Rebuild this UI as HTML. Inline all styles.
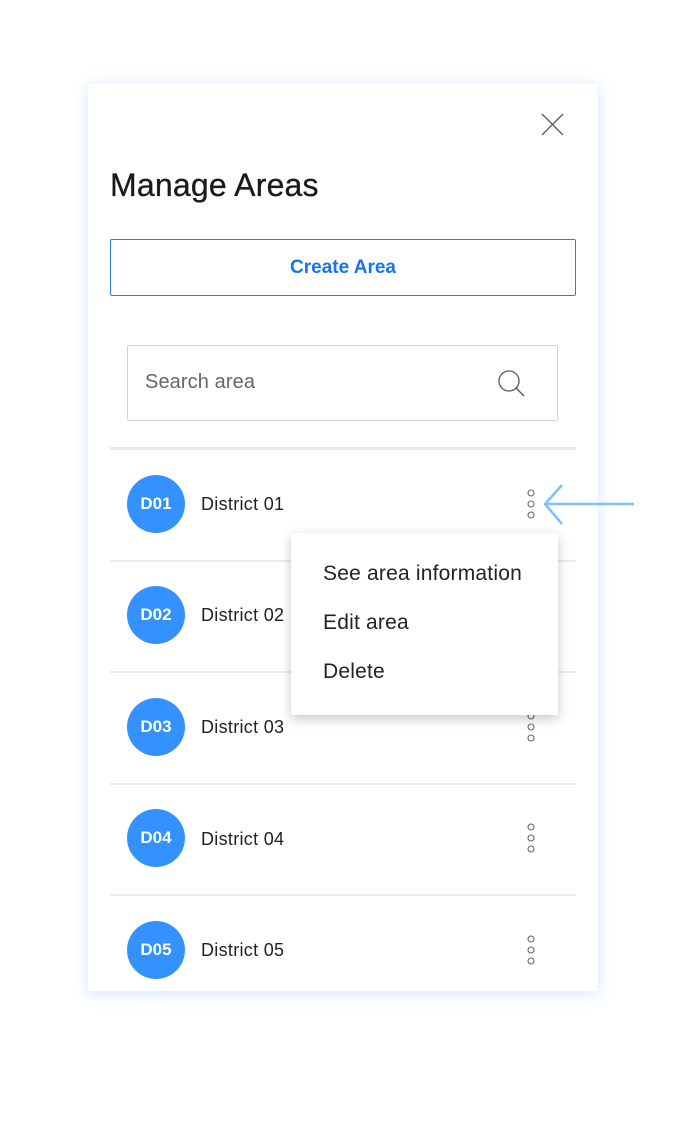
<!DOCTYPE html>
<html><head><style>
body{margin:0;width:686px;height:1126px;background:#fff;font-family:"Liberation Sans",Roboto,sans-serif;position:relative;overflow:hidden}
.card{position:absolute;left:88px;top:84px;width:510px;height:907px;background:#fff;box-shadow:0 2px 14px rgba(120,180,255,0.35)}
.a{position:absolute}
.title{left:110px;top:167px;font-size:32px;color:#1a1a1a;letter-spacing:0.2px;-webkit-text-stroke:0.3px #1a1a1a}
.btn{left:110px;top:239px;width:464px;height:55px;border:1.5px solid #2a7de8;border-radius:2px;color:#1a73f0;font-size:19px;font-weight:bold;text-align:center;line-height:55px}
.search{left:127px;top:345px;width:429px;height:74px;border:1.5px solid #d4d4d4;border-radius:2px}
.search span{position:absolute;left:17px;top:25px;font-size:20px;color:#666;letter-spacing:0.1px}
.sep{left:110px;top:447px;width:466px;height:3px;background:#e8e8e8}
.div{left:110px;width:466px;height:1.5px;background:#ececec}
.av{left:127px;width:58px;height:58px;border-radius:50%;background:#3392ff;color:#fff;font-weight:bold;font-size:17px;text-align:center;line-height:58px}
.nm{left:201px;font-size:18px;color:#222;letter-spacing:0.3px}
.menu{left:291px;top:533px;width:267px;height:182px;background:#fff;box-shadow:0 4px 12px rgba(0,0,0,0.22);border-radius:2px}
.mi{position:absolute;left:32px;font-size:21px;color:#222;letter-spacing:0.2px}
</style></head><body>
<div class="card"></div>
<svg class="a" style="left:540px;top:112px" width="25" height="25"><path d="M2 2L23 23M23 2L2 23" stroke="#555" stroke-width="1.3"/></svg>
<div class="a title">Manage Areas</div>
<div class="a btn">Create Area</div>
<div class="a search"><span>Search area</span>
<svg style="position:absolute;left:368px;top:22px" width="32" height="32"><circle cx="13" cy="13" r="10" fill="none" stroke="#555" stroke-width="1.3"/><path d="M20 20L28 28" stroke="#555" stroke-width="1.3"/></svg></div>
<div class="a sep"></div>
<div class="a div" style="top:560px"></div>
<div class="a div" style="top:671px"></div>
<div class="a div" style="top:783px"></div>
<div class="a div" style="top:894px"></div>

<div class="a av" style="top:475px">D01</div><div class="a nm" style="top:494px">District 01</div>
<div class="a av" style="top:586px">D02</div><div class="a nm" style="top:605px">District 02</div>
<div class="a av" style="top:698px">D03</div><div class="a nm" style="top:717px">District 03</div>
<div class="a av" style="top:809px">D04</div><div class="a nm" style="top:829px">District 04</div>
<div class="a av" style="top:921px">D05</div><div class="a nm" style="top:940px">District 05</div>

<svg class="a" style="left:0;top:0" width="686" height="1126">
<g fill="none" stroke="#666" stroke-width="1.1">
<circle cx="531" cy="493" r="3"/><circle cx="531" cy="504" r="3"/><circle cx="531" cy="515" r="3"/>
<circle cx="531" cy="716" r="3"/><circle cx="531" cy="727" r="3"/><circle cx="531" cy="738" r="3"/>
<circle cx="531" cy="827" r="3"/><circle cx="531" cy="838" r="3"/><circle cx="531" cy="849" r="3"/>
<circle cx="531" cy="939" r="3"/><circle cx="531" cy="950" r="3"/><circle cx="531" cy="961" r="3"/>
</g>
<path d="M546 504H634M562 485L545 504L562 524" fill="none" stroke="#7cc0ff" stroke-width="2.5"/>
</svg>
<div class="a menu">
<div class="mi" style="top:29px">See area information</div>
<div class="mi" style="top:78px">Edit area</div>
<div class="mi" style="top:127px">Delete</div>
</div>
</body></html>
